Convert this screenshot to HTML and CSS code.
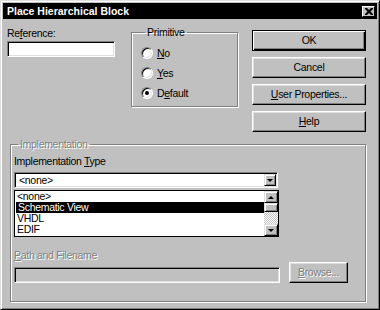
FILE: index.html
```html
<!DOCTYPE html>
<html lang="en">
  <head>
    <meta charset="UTF-8" />
    <title>Place Hierarchical Block</title>
    <link rel="stylesheet" href="styles.css">
  </head>
  <body>
    <div class="window">
      <div class="titlebar">
        <span class="title">Place Hierarchical Block</span>
        <span class="close">
          <svg width="8" height="7" viewBox="0 0 8 7">
            <path d="M0 0h2l2 2 2-2h2v1l-2.5 2.5 2.5 2.5v1h-2l-2-2-2 2h-2v-1l2.5-2.5-2.5-2.5z" fill="#000" />
          </svg>
        </span>
      </div>

      <div class="content">
        <div class="top">
          <div class="ref">
            <div class="label">Re<u>f</u>erence:</div>
            <div class="field"></div>
          </div>

          <fieldset class="group primitive">
            <legend>Primitive</legend>
            <div class="radio"><span class="dot"></span><span><u>N</u>o</span></div>
            <div class="radio"><span class="dot"></span><span><u>Y</u>es</span></div>
            <div class="radio"><span class="dot checked"></span><span>D<u>e</u>fault</span></div>
          </fieldset>

          <div class="buttons">
            <div class="btn default">OK</div>
            <div class="btn">Cancel</div>
            <div class="btn"><span><u>U</u>ser Properties...</span></div>
            <div class="btn"><span><u>H</u>elp</span></div>
          </div>
        </div>

        <fieldset class="group impl">
          <legend class="off">Implementation</legend>
          <div class="label">Implementation <u>T</u>ype</div>
          <div class="combo">
            <span class="combo-text">&lt;none&gt;</span>
            <span class="arrow-btn"><span class="tri down"></span></span>
          </div>
          <div class="list">
            <div class="items">
              <div class="item">&lt;none&gt;</div>
              <div class="item selected">Schematic View</div>
              <div class="item">VHDL</div>
              <div class="item">EDIF</div>
            </div>
            <div class="scrollbar">
              <span class="arrow-btn"><span class="tri up"></span></span>
              <span class="thumb"></span>
              <span class="track"></span>
              <span class="arrow-btn"><span class="tri down"></span></span>
            </div>
          </div>
          <div class="label off path-label"><u>P</u>ath and Filename</div>
          <div class="path-row">
            <div class="field disabled"></div>
            <div class="btn browse off"><span><u>B</u>rowse...</span></div>
          </div>
        </fieldset>
      </div>
    </div>
  </body>
</html>
```

FILE: styles.css
```css
* {
  box-sizing: border-box;
}
body {
  margin: 0;
  background: #c0c0c0;
  font-family: "Liberation Sans", Arial, sans-serif;
  font-size: 10.5px;
  letter-spacing: -0.3px;
  line-height: 13px;
  color: #000;
}
u {
  text-decoration-thickness: 1px;
  text-underline-offset: 1px;
}
.window {
  width: 380px;
  height: 310px;
  padding: 1px;
  background: #c0c0c0;
  border: 1px solid;
  border-color: #dfdfdf #000 #000 #dfdfdf;
  box-shadow: inset 1px 1px #fff, inset -1px -1px #808080;
}
.titlebar {
  height: 16px;
  margin: 1px 1px 0;
  background: #000;
  display: flex;
  align-items: center;
  justify-content: space-between;
  padding: 0 2px 0 4px;
}
.title {
  font-weight: bold;
  font-size: 10.5px;
  letter-spacing: 0;
  color: #fff;
}
.close {
  width: 13px;
  height: 11px;
  background: #c0c0c0;
  display: flex;
  align-items: center;
  justify-content: center;
  border: 1px solid;
  border-color: #fff #000 #000 #fff;
}
.content {
  padding: 8px 10px 0 5px;
}
.top {
  display: flex;
  align-items: flex-start;
}
.ref {
  width: 108px;
  margin-right: 16px;
}
.field {
  height: 16px;
  margin-top: 1px;
  background: #fff;
  border: 1px solid;
  border-color: #808080 #fff #fff #808080;
  box-shadow: inset 1px 1px #000, inset -1px -1px #dfdfdf;
}
.field.disabled {
  background: #c0c0c0;
}
.group {
  margin: 0;
  padding: 0;
  border: 1px solid #808080;
  box-shadow: inset 1px 1px #fff, 1px 1px #fff;
  min-width: 0;
}
.group legend {
  margin-left: 4px;
  padding: 0 2px;
  line-height: 11px;
}
.primitive {
  width: 107px;
  height: 80px;
  margin-right: 14px;
  padding: 5px 0 0 9px;
}
.radio {
  display: flex;
  align-items: center;
  height: 20px;
  gap: 4px;
}
.dot {
  width: 12px;
  height: 12px;
  border-radius: 50%;
  background: #fff;
  border: 1px solid;
  border-color: #808080 #fff #fff #808080;
  box-shadow: inset 1px 1px #000, inset -1px -1px #dfdfdf;
  display: flex;
  align-items: center;
  justify-content: center;
}
.dot.checked::after {
  content: "";
  width: 4px;
  height: 4px;
  border-radius: 50%;
  background: #000;
}
.buttons {
  width: 114px;
  margin-top: 3px;
  display: flex;
  flex-direction: column;
  gap: 6px;
}
.btn {
  height: 21px;
  display: flex;
  align-items: center;
  justify-content: center;
  background: #c0c0c0;
  border: 1px solid;
  border-color: #fff #000 #000 #fff;
  box-shadow: inset -1px -1px #808080, inset 1px 1px #dfdfdf;
}
.btn.default {
  border: 1px solid #000;
  box-shadow: inset 1px 1px #fff, inset -1px -1px #000, inset -2px -2px #808080;
}
.impl {
  margin-top: 7px;
  margin-left: 3px;
  width: 356px;
  height: 163px;
  padding: 5px 0 0 3px;
}
.off {
  color: #808080;
  text-shadow: 1px 1px #fff;
}
.combo {
  width: 264px;
  height: 16px;
  margin-top: 4px;
  display: flex;
  align-items: center;
  justify-content: space-between;
  padding: 0 1px 0 4px;
  background: #fff;
  border: 1px solid;
  border-color: #808080 #fff #fff #808080;
  box-shadow: inset 1px 1px #000, inset -1px -1px #dfdfdf;
}
.arrow-btn {
  width: 12px;
  height: 12px;
  display: flex;
  align-items: center;
  justify-content: center;
  background: #c0c0c0;
  border: 1px solid;
  border-color: #dfdfdf #000 #000 #dfdfdf;
  box-shadow: inset 1px 1px #fff, inset -1px -1px #808080;
}
.tri {
  width: 0;
  height: 0;
  border-left: 3px solid transparent;
  border-right: 3px solid transparent;
}
.tri.down {
  border-top: 3px solid #000;
}
.tri.up {
  border-bottom: 3px solid #000;
}
.list {
  width: 265px;
  height: 47px;
  margin-top: 2px;
  display: flex;
  background: #fff;
  border: 1px solid #000;
}
.items {
  flex: 1;
}
.item {
  height: 11px;
  line-height: 11px;
  padding-left: 2px;
}
.item.selected {
  background: #000;
  color: #fff;
  margin-left: 1px;
  padding-left: 2px;
}
.scrollbar {
  width: 14px;
  display: flex;
  flex-direction: column;
}
.scrollbar .arrow-btn {
  width: 14px;
  height: 12px;
}
.thumb {
  height: 9px;
  background: #c0c0c0;
  border: 1px solid;
  border-color: #dfdfdf #000 #000 #dfdfdf;
  box-shadow: inset 1px 1px #fff, inset -1px -1px #808080;
}
.track {
  flex: 1;
  background: repeating-conic-gradient(#fff 0 25%, #c0c0c0 0 50%) 0 0 / 2px 2px;
}
.path-label {
  margin-top: 12px;
}
.path-row {
  display: flex;
  align-items: flex-end;
  gap: 9px;
}
.path-row .field {
  width: 266px;
}
.browse {
  width: 59px;
}
```
